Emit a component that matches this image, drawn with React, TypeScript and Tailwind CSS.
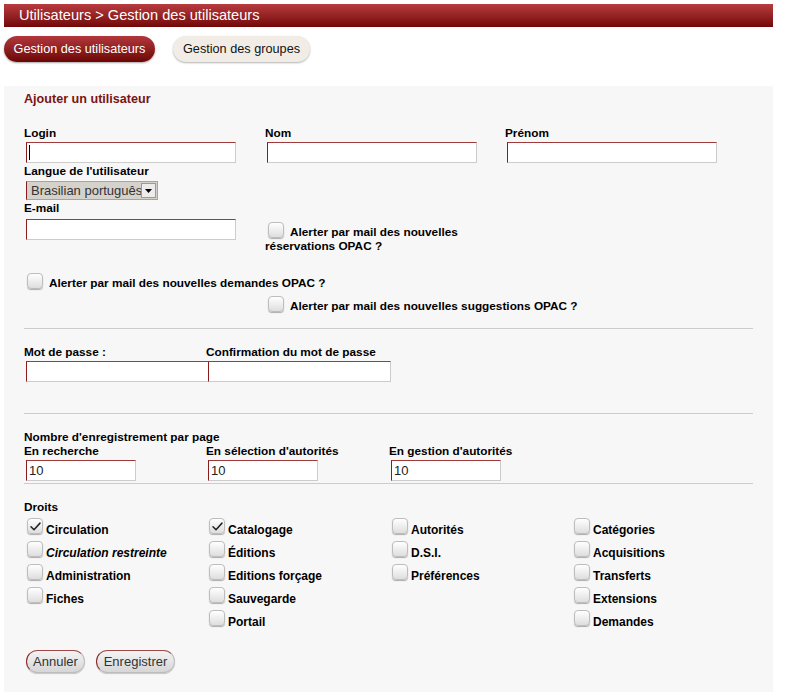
import React from 'react';

const font = "font-['Liberation_Sans',Arial,Helvetica,sans-serif]";

function Box({ checked = false, top = false }: { checked?: boolean; top?: boolean }) {
  return (
    <span
      className={`inline-block w-4 h-4 rounded-[4px] border border-[#bdbdbd] bg-linear-to-b from-white to-[#dedede] shadow-[0_1px_1px_rgba(0,0,0,0.3)] relative ${
        top ? 'align-[-2px] ml-[3px] mr-[6px]' : 'align-baseline ml-[3px] mr-[3px]'
      }`}
    >
      {checked && (
        <svg viewBox="0 0 16 16" className="absolute left-0 top-0 w-[15px] h-[15px]">
          <path d="M3.2 8.2 L6.4 11.4 L12.8 4.4" fill="none" stroke="#222" strokeWidth="1.6" strokeLinecap="round" strokeLinejoin="round" />
        </svg>
      )}
    </span>
  );
}

function TextInput({ w, value = '', caret = false }: { w: string; value?: string; caret?: boolean }) {
  return (
    <div
      className={`${w} h-[21px] ml-[2px] bg-white border border-[#cccccc] border-t-[#9e3a3a] border-l-[#8a1c1c] text-[13px] leading-[19px] pl-[2px] text-[#222]`}
    >
      {caret && <span className="inline-block w-px h-[15px] bg-black align-[-3px]" />}
      {value}
    </div>
  );
}

function Label({ children }: { children: React.ReactNode }) {
  return <div className="text-[11.8px] leading-[14px] font-bold text-black">{children}</div>;
}

function Right({ label, checked = false, italic = false }: { label: string; checked?: boolean; italic?: boolean }) {
  return (
    <div className="h-[23px] text-[12px] leading-[14px] font-bold text-black whitespace-nowrap">
      <Box checked={checked} />
      <span className={italic ? 'italic' : ''}>{label}</span>
    </div>
  );
}

export default function App() {
  const cols: { label: string; checked?: boolean; italic?: boolean }[][] = [
    [{ label: 'Circulation', checked: true }, { label: 'Circulation restreinte', italic: true }, { label: 'Administration' }, { label: 'Fiches' }],
    [{ label: 'Catalogage', checked: true }, { label: 'Éditions' }, { label: 'Editions forçage' }, { label: 'Sauvegarde' }, { label: 'Portail' }],
    [{ label: 'Autorités' }, { label: 'D.S.I.' }, { label: 'Préférences' }],
    [{ label: 'Catégories' }, { label: 'Acquisitions' }, { label: 'Transferts' }, { label: 'Extensions' }, { label: 'Demandes' }],
  ];

  return (
    <div className={`${font} bg-white w-[786px] min-h-[692px] p-[4px] pb-0`}>
      {/* Breadcrumb bar */}
      <div className="w-[769px] h-[23px] bg-linear-to-b from-[#b83b3f] to-[#730606] text-white text-[14.6px] leading-[23px] pl-[15px]">
        Utilisateurs &gt; Gestion des utilisateurs
      </div>

      {/* Tabs */}
      <div className="flex mt-[9px]">
        <div className="w-[151px] h-[26px] rounded-full bg-linear-to-b from-[#b2373b] to-[#6d0505] text-white text-[12.7px] leading-[26px] text-center shadow-[0_1px_2px_rgba(0,0,0,0.35)]">
          Gestion des utilisateurs
        </div>
        <div className="w-[137px] h-[26px] ml-[18px] rounded-full bg-[#f1ede6] text-[#111] text-[12.7px] leading-[26px] text-center shadow-[0_1px_2px_rgba(0,0,0,0.3)]">
          Gestion des groupes
        </div>
      </div>

      {/* Form panel */}
      <div className="w-[769px] mt-[24px] bg-[#f7f7f7] px-[20px] pt-[5px] pb-[24px]">
        <div className="text-[12.6px] leading-[16px] font-bold text-[#7a1414]">Ajouter un utilisateur</div>

        <div className="grid grid-cols-[241px_240px_240px] mt-[19px]">
          <div>
            <Label>Login</Label>
            <div className="mt-[2px]"><TextInput w="w-[210px]" caret /></div>
          </div>
          <div>
            <Label>Nom</Label>
            <div className="mt-[2px]"><TextInput w="w-[210px]" /></div>
          </div>
          <div>
            <Label>Prénom</Label>
            <div className="mt-[2px]"><TextInput w="w-[210px]" /></div>
          </div>

          <div>
            <div className="mt-[1px]"><Label>Langue de l'utilisateur</Label></div>
            <div className="mt-[3px] ml-[2px] w-[132px] h-[19px] bg-[#d5d1cb] border border-[#a8a2a0] border-l-[#8a1c1c] flex items-center overflow-hidden relative">
              <span className="text-[13px] leading-[16px] text-[#333] pl-[4px] whitespace-nowrap">Brasilian português</span>
              <span className="absolute right-[1px] top-[1px] w-[15px] h-[15px] bg-[#ececec] border border-[#9a9a9a] flex items-center justify-center">
                <svg viewBox="0 0 7 4" className="w-[7px] h-[4px]"><path d="M0 0 H7 L3.5 4 Z" fill="#000" /></svg>
              </span>
            </div>
            <div className="mt-[1px]"><Label>E-mail</Label></div>
            <div className="mt-[4px]"><TextInput w="w-[210px]" /></div>
          </div>
          <div className="col-span-2">
            <div className="mt-[59px] w-[210px] text-[11.8px] leading-[14px] font-bold text-black">
              <Box top />Alerter par mail des nouvelles réservations OPAC ?
            </div>
          </div>
        </div>

        <div className="mt-[20px] text-[11.8px] leading-[14px] font-bold text-black">
          <Box top />Alerter par mail des nouvelles demandes OPAC ?
        </div>
        <div className="mt-[6px] pl-[241px] text-[11.8px] leading-[14px] font-bold text-black">
          <Box top />Alerter par mail des nouvelles suggestions OPAC ?
        </div>

        <div className="mt-[15px] h-px bg-[#cccccc]" />

        {/* Password */}
        <div className="grid grid-cols-[182px_182px] mt-[16px]">
          <div>
            <Label>Mot de passe :</Label>
            <div className="mt-[2px]"><TextInput w="w-[183px]" /></div>
          </div>
          <div>
            <Label>Confirmation du mot de passe</Label>
            <div className="mt-[2px]"><TextInput w="w-[183px]" /></div>
          </div>
        </div>

        <div className="mt-[31px] h-px bg-[#cccccc]" />

        {/* Records per page */}
        <div className="mt-[16px]"><Label>Nombre d'enregistrement par page</Label></div>
        <div className="grid grid-cols-[182px_183px_182px]">
          <div>
            <Label>En recherche</Label>
            <div className="mt-[2px]"><TextInput w="w-[110px]" value="10" /></div>
          </div>
          <div>
            <Label>En sélection d'autorités</Label>
            <div className="mt-[2px]"><TextInput w="w-[110px]" value="10" /></div>
          </div>
          <div>
            <Label>En gestion d'autorités</Label>
            <div className="mt-[2px]"><TextInput w="w-[110px]" value="10" /></div>
          </div>
        </div>

        <div className="mt-[2px] h-px bg-[#cccccc]" />

        {/* Rights */}
        <div className="mt-[16px]"><Label>Droits</Label></div>
        <div className="grid grid-cols-[182px_183px_182px_182px] mt-[4px]">
          {cols.map((col, i) => (
            <div key={i}>
              {col.map((r) => (
                <Right key={r.label} label={r.label} checked={r.checked} italic={r.italic} />
              ))}
            </div>
          ))}
        </div>

        {/* Actions */}
        <div className="flex mt-[17px] ml-[2px]">
          <button className="w-[59px] h-[23px] rounded-full border border-[#bdbdbd] border-l-[#8a2020] border-t-[#a04848] bg-linear-to-b from-[#f4f4f4] to-[#d6d6d6] text-[13px] leading-[21px] text-[#333] shadow-[0_1px_1px_rgba(0,0,0,0.2)]">
            Annuler
          </button>
          <button className="w-[79px] h-[23px] ml-[11px] rounded-full border border-[#bdbdbd] border-l-[#8a2020] border-t-[#a04848] bg-linear-to-b from-[#f4f4f4] to-[#d6d6d6] text-[13px] leading-[21px] text-[#333] shadow-[0_1px_1px_rgba(0,0,0,0.2)]">
            Enregistrer
          </button>
        </div>
      </div>
    </div>
  );
}
